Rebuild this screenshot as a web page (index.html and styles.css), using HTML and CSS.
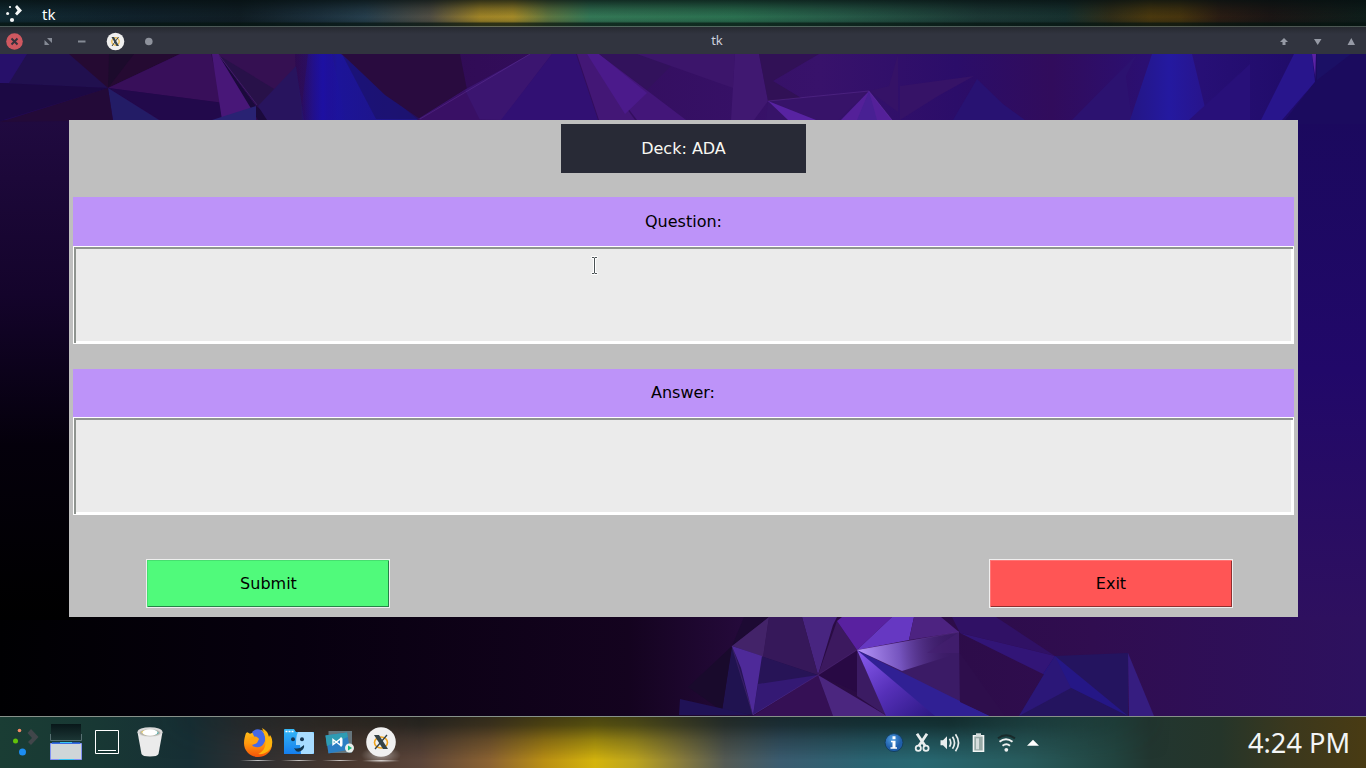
FILE: index.html
```html
<!DOCTYPE html>
<html lang="en">
<head>
<meta charset="utf-8">
<title>tk</title>
<link rel="stylesheet" href="styles.css">
</head>
<body>
<header class="panel">
  <svg class="launcher" width="17" height="18" viewBox="0 0 17 18" fill="#f4f6f6"><circle cx="4" cy="2" r="1.1"/><circle cx="1.6" cy="8.5" r="1.5"/><circle cx="6" cy="15" r="2.1"/><path d="M9 2l2-2 5 5.500-5 5-2-2 2.500-3z"/></svg>
  <span class="app-name">tk</span>
</header>
<div class="titlebar">
  <div class="controls">
    <svg width="160" height="27" viewBox="0 0 160 27">
      <circle cx="14.5" cy="14.5" r="8.3" fill="#cf5860"/><path d="M11.5 11.5l6 6m0-6l-6 6" stroke="#37313c" stroke-width="2"/>
      <path d="M44.500 13v5h5zM47 11h5v5z" fill="#858a95"/>
      <path d="M78 13.500h7.500v2H78z" fill="#858a95"/>
      <circle cx="115.5" cy="14.5" r="8.8" fill="#efefef"/><circle cx="115.5" cy="14.5" r="3.7" fill="none" stroke="#edbd55" stroke-width="1.4"/><path d="M111.500 10h2.500l5 9h-2.500z" fill="#34434b"/><path d="M118.500 10l-6.500 9" stroke="#34434b"/>
      <circle cx="148.8" cy="14.5" r="3.8" fill="#8e929c"/>
    </svg>
  </div>
  <span class="window-title">tk</span>
  <div class="controls right">
    <svg width="90" height="27" viewBox="0 0 90 27" fill="#969aa5"><path d="M8 11l4 4H9.500v3h-3v-3H4zM38 12h7.500l-3.800 6zM71.500 18h7.500l-3.700-7z"/></svg>
  </div>
</div>
<main class="desktop">
  <svg class="wallpaper" viewBox="0 54 1366 662" preserveAspectRatio="none">
    <defs>
      <linearGradient id="base" x1="0" x2="1" y1="0" y2="0"><stop offset="0" stop-color="#210a56"/><stop offset=".16" stop-color="#2d0a4c"/><stop offset=".35" stop-color="#310c57"/><stop offset=".6" stop-color="#38126b"/><stop offset=".7" stop-color="#2b0d69"/><stop offset=".77" stop-color="#310c5c"/><stop offset=".86" stop-color="#291079"/><stop offset="1" stop-color="#1b0960"/></linearGradient>
      <linearGradient id="low" x1="0" x2="1" y1="0" y2="0"><stop offset="0" stop-color="#000002"/><stop offset=".22" stop-color="#07000f"/><stop offset=".46" stop-color="#14031f"/><stop offset=".56" stop-color="#280b40"/><stop offset=".8" stop-color="#300d50"/><stop offset="1" stop-color="#2d115f"/></linearGradient>
      <linearGradient id="leftFade" x1="0" x2="0" y1="0" y2="1"><stop offset="0" stop-color="#200a40"/><stop offset=".35" stop-color="#14042b"/><stop offset=".65" stop-color="#04000b"/><stop offset="1" stop-color="#000"/></linearGradient>
      <linearGradient id="rightFade" x1="0" x2="0" y1="0" y2="1"><stop offset="0" stop-color="#1b095e"/><stop offset=".5" stop-color="#210869"/><stop offset="1" stop-color="#2e105f"/></linearGradient>
      <linearGradient id="beam" gradientUnits="userSpaceOnUse" x1="857" x2="950" y1="650" y2="640"><stop offset="0" stop-color="#b696fb"/><stop offset=".45" stop-color="#7554be"/><stop offset="1" stop-color="#43206d" stop-opacity="0"/></linearGradient>
      <linearGradient id="ray" x1="0" x2="1" y1="0" y2="1"><stop offset="0" stop-color="#8b5df1"/><stop offset=".5" stop-color="#5630b8"/><stop offset="1" stop-color="#2b1783"/></linearGradient>
      <linearGradient id="blue" x1="0" x2="1" y1="0" y2="0"><stop offset="0" stop-color="#251480" stop-opacity="0"/><stop offset=".35" stop-color="#1c1499"/><stop offset="1" stop-color="#1f1580"/></linearGradient>
      <linearGradient id="streak" x1="0" x2="1" y1="0" y2="0"><stop offset="0" stop-color="#1d10a2" stop-opacity="0"/><stop offset=".5" stop-color="#1d10a2"/><stop offset="1" stop-color="#1d10a2" stop-opacity="0"/></linearGradient>
      <linearGradient id="column" x1="0" x2="1" y1="0" y2="0"><stop offset="0" stop-color="#241684"/><stop offset=".5" stop-color="#2419a0"/><stop offset="1" stop-color="#28148a"/></linearGradient>
    </defs>
    <path fill="url(#base)" d="M0 54h1366v80H0z"/>
    <path fill="url(#low)" d="M0 600h1366v116H0z"/>
    <path fill="url(#leftFade)" d="M0 120h80v500H0z"/>
    <path fill="url(#rightFade)" d="M1290 120h76v500h-76z"/>
    <path fill="#21104f" d="M0 54h69l39 34-108-5z"/>
    <path fill="#27106a" d="M0 54h27L9 83H0z"/><path fill="#1c0944" d="M0 83l108 5-108 33z"/>
    <path fill="#250a32" d="M69 54h111l-72 34z"/><path fill="#1c0b2c" d="M109 54h25l-26 34z"/>
    <path fill="#380f5a" d="M108 88l72-34h31l12 49z"/>
    <path fill="#22094b" d="M108 88l116 15-1 17h-63z"/>
    <path fill="#231c66" d="M108 88l51 32h-46z"/><path fill="#230a38" d="M108 88L0 122l69-1h44z"/>
    <path fill="#481778" d="M212 54h6l38 52-34 14z"/><path fill="#1b0a3c" d="M218 54l38 52 18 14h-16z"/>
    <path fill="#351052" d="M218 54h77l1 24-36 27z"/><path fill="#281149" d="M220 56l84 51h-46z"/>
    <path fill="#292273" d="M256 106l-44 14h44z"/><path fill="#28145e" d="M258 106l38-40 8 54h-37z"/>
    <path fill="url(#blue)" d="M294 54h47l77 66H303z"/><path fill="url(#streak)" d="M308 54h24l14 66h-46z"/><path fill="#1a1164" opacity=".6" d="M343 56l79 63h-46z"/>
    <path fill="#290b3f" d="M342 54h118l7 36-47 29-35-24z"/>
    <path fill="#3b1570" d="M418 119l48-30 64-35h22l-50 66z"/><path fill="#391065" d="M465 90l15 30h-62z"/>
    <path fill="#311073" d="M552 54h24l22 66h-97z"/>
    <path fill="#431776" d="M577 54h10l48 66h-36z"/><path fill="#431679" d="M587 54h12l87 66h-49z"/><path fill="#4b1a8b" d="M587 54h12l48 39-22 21z"/>
    <path fill="#32125c" d="M599 54h84l-36 36z"/><path fill="#3c156b" d="M637 54h98l-2 34z"/><path fill="#401871" d="M735 54h24l9 47-14 19h-23z"/>
    <path fill="#311156" d="M759 54h60l-46 27 30 18-35 2z"/>
    <path fill="#371369" d="M768 101l101-10-31 29h-72z"/><path fill="#5823a2" d="M768 101l48 19h-28z"/>
    <path fill="#542099" d="M869 91l23 29h-51z"/><path fill="#482093" d="M869 91l8 29h-20z"/>
    <path fill="#351267" d="M898 54v58l-29-21 20-5z"/><path fill="#361367" d="M900 86l74-10-36 20-38 24z"/><path fill="#281272" d="M977 79l-24 41h72l-22-16z"/>
    <path fill="#2c1270" d="M1137 54l-65 66h60l-6-44z"/><path fill="url(#column)" d="M1152 54h40l16 66h-78z"/><path fill="#281079" d="M1250 64v56h-61z"/>
    <path fill="#28158c" d="M1294 54h18l3 28-33 38h-21z"/><path fill="#5b22a5" d="M1312 54h4v28z"/><path fill="#1b0b5e" d="M1316 54h50v70h-84l33-42z"/>
    <path fill="#1b1065" d="M1317 54h34l-34 26z"/>

    <path fill="#33164f" d="M732 646l37-29h33l16 58z"/><path fill="#1d0a33" d="M732 646l12-29h25z"/><path fill="#432369" d="M732 646l37-29-6 41z"/>
    <path fill="#482580" d="M802 617h35l-4 8-15 50z"/><path fill="#36185a" d="M769 617h33l16 58-55-18z"/>
    <path fill="#3c195f" d="M837 621l-19 54 39-25z"/><path fill="#5921a0" d="M837 621l5-4h50l-35 33z"/>
    <path fill="#6638c2" d="M892 617h22l-5 23-52 10z"/><path fill="#4d2381" d="M914 617h27l18 15-50 8z"/>
    <path fill="#271457" d="M732 646l32 11 54 18-65 40z"/><path fill="#341974" d="M758 684l60-9-65 40z"/>
    <path fill="#4e2a99" d="M732 646l30 10-9 59-12-47z"/><path fill="#201350" d="M732 646l-10 65 31 4z"/>
    <path fill="#190a2c" d="M732 646l-44 41 34 24z"/><path fill="#201256" d="M680 699l71 16h-72z"/>
    <path fill="#280944" d="M818 675l39-25v42z"/><path fill="#351055" d="M753 716l65-41 15 41z"/><path fill="#4b267f" d="M818 675l69 41h-54z"/>
    <path fill="#3b1b63" d="M857 650v46l30 20z"/>
    <path fill="#3b1b66" d="M857 650l102-18 1 80z"/><path fill="#302094" d="M857 650l133 66h-65z"/><path fill="url(#ray)" d="M857 650l78 66h-49z"/>
    <path fill="url(#beam)" d="M857 650l102-18v21l-57 18z"/>
    <path fill="#451f70" d="M959 632v21h-32z" opacity=".6"/><path fill="#2e0e4c" d="M960 653l45 63h-15l-30-14z"/>
    <path fill="#301165" d="M952 617h44l59 39-95-23-8-16z"/><path fill="#321577" d="M960 633l95 23-12 18z"/>
    <path fill="#24145f" d="M1055 656l73-3v63h-109z"/><path fill="#261890" opacity=".8" d="M1055 656l73 60-85-42z"/><path fill="#2b1778" d="M1055 656l16 32-52 28z"/><path fill="#361d80" d="M1128 653l26 63h-25z"/>
    <g fill="none" stroke="#965ccd" stroke-opacity=".3" stroke-width=".7"><path d="M218 54l39 51M420 119l110-65M768 101l101-10 23 29M818 675l39-25 102-18M753 715l65-40M732 646l21 69"/></g>
  </svg>
  <section class="form">
    <div class="deck">Deck: ADA</div>
    <div class="field question"><label for="q">Question:</label><div class="entry" id="q"><svg class="ibeam" width="9" height="19" viewBox="0 0 9 19" fill="none"><path d="M1.500 1.500h6M4.500 1.500v16M1.500 17.500h6" stroke="#fff" stroke-width="3"/><path d="M2 1.500h2l.5.500.500-.500h2M4.500 2v15M2 17.500h2l.5-.500.500.500h2" stroke="#4a5154"/></svg></div></div>
    <div class="field answer"><label for="a">Answer:</label><div class="entry" id="a"></div></div>
    <div class="actions"><button class="submit">Submit</button><button class="exit">Exit</button></div>
  </section>
</main>
<footer class="taskbar">
  <svg class="dock" width="410" height="51" viewBox="0 717 410 51">
    <defs>
      <linearGradient id="fox" x1="0" x2="0" y1="0" y2="1"><stop offset="0" stop-color="#ffc119"/><stop offset=".5" stop-color="#ff980e"/><stop offset="1" stop-color="#f65208"/></linearGradient>
      <linearGradient id="win" x1="0" x2="0" y1="0" y2="1"><stop offset="0" stop-color="#081719"/><stop offset="1" stop-color="#1b3534"/></linearGradient>
      <linearGradient id="finder" x1="0" x2="0" y1="0" y2="1"><stop offset="0" stop-color="#36b8f6"/><stop offset="1" stop-color="#157eee"/></linearGradient>
      <linearGradient id="shine"><stop offset="0" stop-color="#fff" stop-opacity="0"/><stop offset=".5" stop-color="#fff" stop-opacity=".7"/><stop offset="1" stop-color="#fff" stop-opacity="0"/></linearGradient>
      <radialGradient id="glow"><stop offset="0" stop-color="#fff" stop-opacity=".45"/><stop offset="1" stop-color="#fff" stop-opacity="0"/></radialGradient>
    </defs>
    <circle cx="19.500" cy="730.500" r="1.800" fill="#f38b68"/><circle cx="15.500" cy="741" r="2.500" fill="#62c20a"/><circle cx="22.500" cy="752" r="3.500" fill="#1c8df1"/><path d="M31 729l7.500 8-7.500 8-3-3 4-4-4.500-5z" fill="#41464a"/>
    <path fill="url(#win)" d="M51 724h30v16H51z"/><path d="M50.500 734v6.500h31V734" fill="none" stroke="#587072"/>
    <path d="M50.500 743.500h31v16h-31z" fill="#d0d6d8" stroke="#8191f4"/><path d="M52 743h28" stroke="#2360dc" stroke-width="1.500"/><path d="M60 742.500h12M59 759.500h15" stroke="#37c3f4"/>
    <path d="M95.500 730.500h23v23h-23zM98 750.500h18" fill="none" stroke="#fff"/>
    <path d="M137.500 732l4 22q1 2.500 8.500 2.500t8.500-2.500l4-22z" fill="#ebebeb"/><ellipse cx="150" cy="732" rx="12.500" ry="4.800" fill="#d9d9d9"/><ellipse cx="150" cy="732.800" rx="10.500" ry="3.500" fill="#b7b5ac"/><path d="M141 732l4-2v5z" fill="#f2d34c"/><path d="M155 730l4 3-4 2z" fill="#31a9a8"/><ellipse cx="150" cy="732.500" rx="7.500" ry="3.300" fill="#fff"/>
    <path d="M246 733l1.500-.8 2.500 1.500 2-.7 10-3 6 6 4 6c1 8-5 15-14 15-8 0-14-6-14-14 0-4 1-7 2-10z" fill="url(#fox)"/>
    <path d="M252 732q4-4 9-2 5 4 4 11c-2 5-5 7-9 6q-3 0-4-2l5-2 2-4-4-1z" fill="#4569e6"/>
    <path d="M251 737l5-.5 3 2-4 2 2 2q-3 3-7 1-3-4 1-6.500z" fill="#ffa20e"/>
    <path d="M262 728q6 3 7 9l1-2q3 4 2 9c-1 7-8 11-14 10 7-3 11-11 4-26z" fill="#ffb50e"/>
    <path d="M284 730q0-1 1-1h9l2 3h18v22h-30z" fill="url(#finder)"/><path d="M298 732h14q2 0 2 2v19q0 1-2 1h-11l-1-9h-4c0-5 0-9 2-13z" fill="#a8dcff"/><path d="M285.500 731.500h8.500" stroke="#fff" stroke-width="1.500" stroke-dasharray="2 1"/><circle cx="293" cy="739.300" r="2" fill="#163653"/><circle cx="302" cy="739.300" r="2" fill="#163653"/><path d="M294 748q5 2 10-3c1 5-5 8-8 6z" fill="#12364f"/>
    <path d="M328.500 731h23.500v22h-23.500z" fill="#65757c"/><path d="M325.500 735.500l21.500-3 3 17-21.500 4z" fill="#2b7fc4"/><path d="M325.500 735.500l21.500-3 .8 4.500-21 9z" fill="#2f9cb3"/><path d="M333 739.500l8 6v-7l-8 6z" fill="none" stroke="#fff" stroke-width="1.400"/><path d="M340 737.500l2.500 1v7l-2.500 1z" fill="#fff"/><circle cx="349.500" cy="748" r="4.500" fill="#e8eeec"/><path d="M348 745.500l4 2.500-4 2.500z" fill="#14b97b"/>
    <ellipse cx="381" cy="755" rx="20" ry="9" fill="url(#glow)"/><circle cx="381" cy="742" r="14.800" fill="#f0f0f0"/><ellipse cx="381" cy="742.500" rx="6.500" ry="5.500" fill="none" stroke="#f2a41a" stroke-width="1.600"/><path d="M374 735h5l9 14h-5z" fill="#344348"/><path d="M387 735l-12 14" stroke="#344348" stroke-width="1.300"/>
    <g fill="url(#shine)"><path d="M240 760h36v1h-36z"/><path d="M281 760h36v1h-36z"/><path d="M322 760h36v1h-36z"/><path d="M362 760h38v1.500h-38z"/></g>
  </svg>
  <div class="tray">
    <svg width="160" height="28" viewBox="883 728 160 28">
      <defs><radialGradient id="info" cx=".4" cy=".3"><stop offset="0" stop-color="#4e9de1"/><stop offset="1" stop-color="#1f5eaa"/></radialGradient></defs>
      <g transform="translate(0 -.7)">
      <circle cx="894" cy="742.300" r="9" fill="url(#info)" stroke="#14405e"/><path d="M892.500 736h3v3h-3zM891 740.500h4.500v6.500h1.500v1.500h-6.500V747h2v-5H891z" fill="#fff"/>
      <g stroke="#e9eeee" fill="none"><path d="M917 733.500l8 12M927 733.500l-8 12" stroke-width="2.800"/><circle cx="918.300" cy="748" r="2.600" stroke-width="1.800"/><circle cx="926" cy="748" r="2.600" stroke-width="1.800"/></g>
      <path d="M940.500 740h2.500l4-4v13l-4-4h-2.500z" fill="#e9eeee"/><path d="M949.500 738.500q2.500 4 0 8M952.500 736.500q4 6 0 12M955.500 734q6 8.500 0 17" fill="none" stroke="#e9eeee" stroke-width="1.700"/>
      <path d="M973.500 735.500h10v15.500h-10z" fill="#98aaa7" stroke="#f1f4f4" stroke-width="1.600"/><path d="M976 733h5v3h-5z" fill="#d5dcdc"/><path d="M976 738h3v11h-3z" fill="#d6dddd"/>
      <g fill="none" stroke="#eef1f1" stroke-width="1.900"><path d="M998 738q8-6 17 0" stroke="#182a2a" stroke-width="2"/><path d="M999.500 741.500q6.500-5 13 0M1002.500 745.500q4-3 7.500 0"/></g><circle cx="1006.300" cy="749.500" r="1.900" fill="#eef1f1"/>
      <path d="M1027 745.500l6-6 6 6z" fill="#fff"/>
      </g>
    </svg>
  </div>
  <span class="clock">4:24 PM</span>
</footer>
</body>
</html>
```

FILE: styles.css
```css
* { box-sizing: border-box; }
body { margin: 0; width: 1366px; height: 768px; overflow: hidden; display: flex; flex-direction: column; background: #000; font-family: "DejaVu Sans", sans-serif; }
.panel {
  height: 27px; flex: none; display: flex; align-items: center; padding-left: 6px; color: #fff;
  border-bottom: 1px solid rgba(175, 190, 180, .4);
  background:
    linear-gradient(180deg, rgba(5,15,16,.72), rgba(5,15,16,.25) 35%, transparent 65%, rgba(5,20,20,.15) 82%, rgba(5,20,16,.75) 90%),
    linear-gradient(90deg, #122b34 0, #10212b 130px, #101d24 240px, #1c303d 320px, #263e4c 365px, #514e44 430px, #a08427 480px, #a48a28 513px, #5f7641 548px, #347756 590px, #2b7050 735px, #275b48 840px, #1c3835 980px, #17312f 1065px, #302d18 1110px, #4a380e 1150px, #46340e 1180px, #2a1c13 1220px, #1b1514 1270px, #0e1d1a 1366px);
}
.launcher { margin-top: 1px; }
.app-name { margin: 1px 0 0 19px; font: 15px "Noto Sans", sans-serif; }
.titlebar { height: 27px; flex: none; display: flex; justify-content: space-between; background: linear-gradient(#262930, #31343f 7px); color: #ccd0dc; }
.controls { width: 160px; height: 27px; }
.controls svg { display: block; }
.controls.right { display: flex; justify-content: flex-end; }
.window-title { width: 80px; margin-right: 443px; margin-left: auto; text-align: center; font: 13px/27px "Noto Sans", sans-serif; padding-left: 0; }
.controls.right { width: 166px; }
.desktop { position: relative; height: 662px; flex: none; padding: 66px 68px 0 69px; }
.wallpaper { position: absolute; inset: 0; width: 1366px; height: 662px; }
.form { position: relative; width: 1229px; height: 497px; padding: 4px 4px 9px; display: flex; flex-direction: column; background: #bfbfbf; font-size: 16px; color: #000; }
.deck { width: 245px; height: 49px; align-self: center; background: #282a36; color: #f8f8f2; text-align: center; line-height: 49px; margin-bottom: 24px; }
.field { height: 147px; display: flex; flex-direction: column; }
.field label { height: 49px; background: #bd93f9; text-align: center; line-height: 49px; }
.answer { margin-top: 24px; }
.answer label { margin-top: 1px; height: 48px; padding-right: 1px; line-height: 47px; }
.entry { height: 98px; background: #ebebeb; border: 1px solid #fff; box-shadow: inset 2px 2px #8f9490, inset -2px -2px #fff; padding: 9px 0 0 516px; }
.ibeam { display: block; }
.actions { display: flex; justify-content: space-between; margin-top: 44px; padding: 0 61px 0 73px; }
.actions button { width: 244px; height: 49px; padding: 0; font: inherit; color: #000; border: 1px solid #eee; }
.actions .submit { padding-left: 1px; background: #50fa7b; box-shadow: inset 1px 1px #46df6f, inset -1px -1px #278248; }
.actions .exit { background: #ff5555; box-shadow: inset 1px 1px #ff7474, inset -1px -1px #8e2e2e; }
.taskbar {
  position: relative; isolation: isolate;
  height: 52px; flex: none; display: flex; align-items: center; color: #f3f5f5; border-top: 1px solid #87918a;
  background: linear-gradient(90deg, #1a3d34 0, #183834 95px, #172f35 190px, #2d2f32 245px, #49382f 345px, #5c453a 420px, #8c6332 490px, #bb9014 545px, #d4b40d 595px, #bca41f 635px, #84793f 685px, #555b55 725px, #3b5c70 780px, #2a6472 870px, #286872 920px, #285a5b 1030px, #22443f 1115px, #223630 1150px, #25352a 1220px, #3b381d 1290px, #493b13 1366px);
}
.taskbar::before {
  content: ""; position: absolute; inset: 0; z-index: -1;
  background: linear-gradient(180deg, rgba(8,17,16,.68), rgba(8,17,16,.62) 16%, rgba(8,17,16,.3) 45%, transparent 85%);
  -webkit-mask-image: linear-gradient(90deg, transparent 150px, #000 420px, #000 950px, transparent 1170px);
  mask-image: linear-gradient(90deg, transparent 150px, #000 420px, #000 950px, transparent 1170px);
}
.dock { flex: none; }
.tray { margin-left: 473px; width: 160px; height: 28px; }
.tray svg { display: block; }
.clock { margin: 0 0 0 205px; font: 27.2px/51px "Noto Sans", sans-serif; white-space: nowrap; }
```
